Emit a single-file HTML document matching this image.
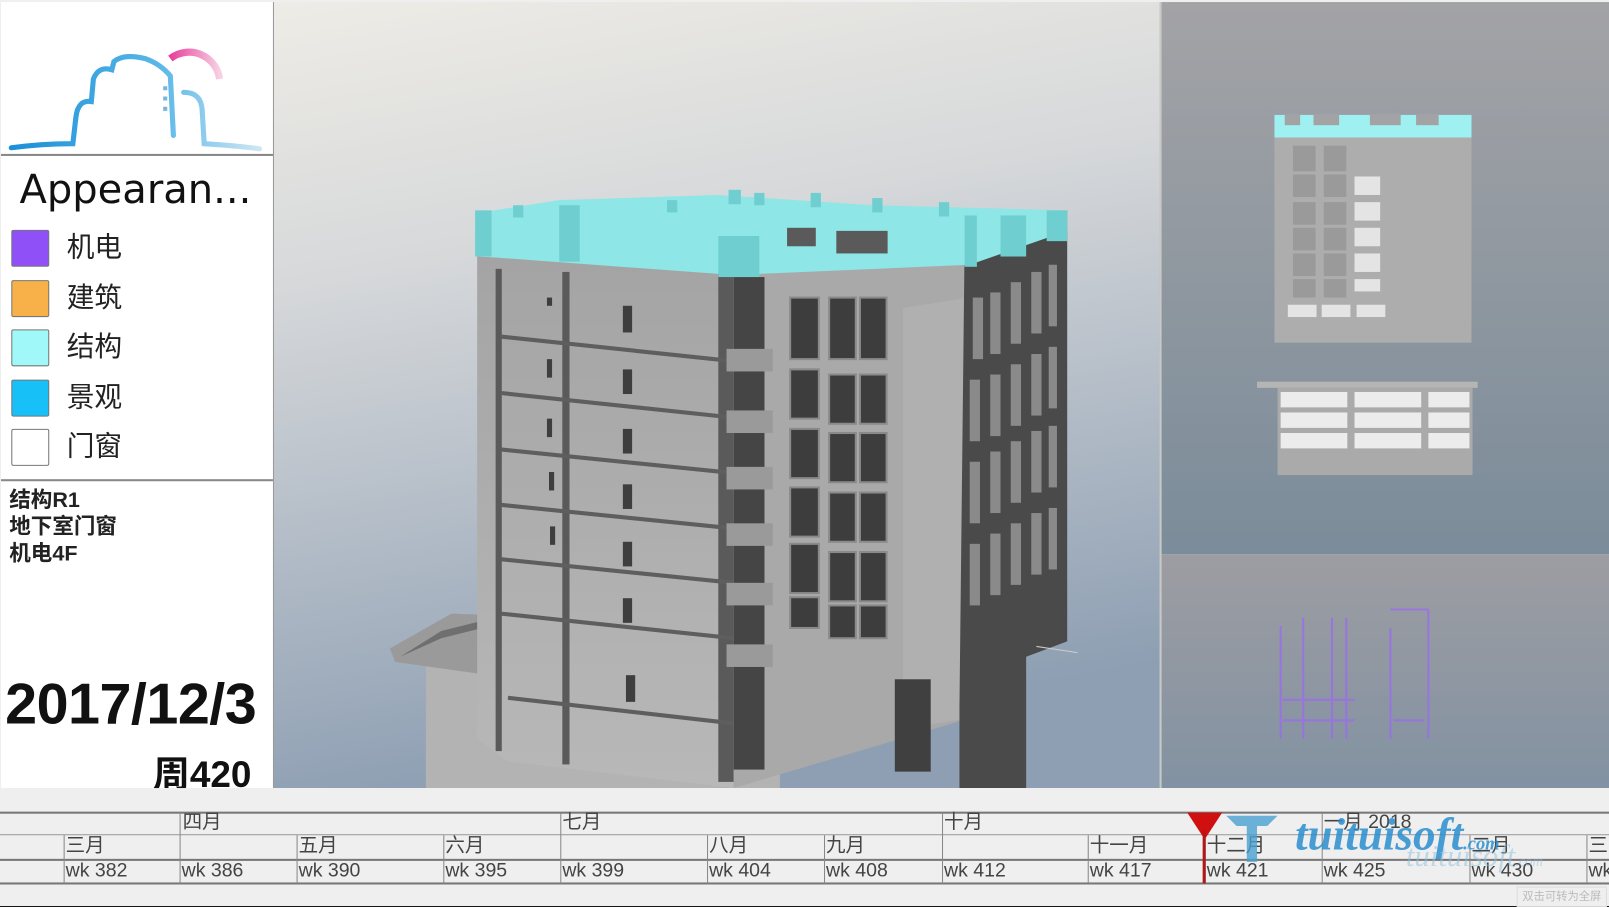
<!DOCTYPE html>
<html><head><meta charset="utf-8"><style>
html,body{margin:0;padding:0;width:1609px;height:906px;overflow:hidden;background:#000}
#w{position:absolute;left:0;top:0;width:1568px;height:883px;transform:scale(1.02615,1.0261);transform-origin:0 0;background:#000;font-family:"Liberation Sans","Noto Sans CJK SC",sans-serif}
.a{position:absolute}
#left{left:1px;top:2px;width:265px;height:766px;background:#fff}
.sw{position:absolute;left:10px;width:35px;height:34px;border:1px solid #777;border-radius:2px}
.lb{position:absolute;left:64px;font-size:27px;color:#222;line-height:34px}
.tl{position:absolute;font-size:19px;color:#444;font-family:"Liberation Sans","Noto Sans CJK SC",sans-serif;line-height:20px}
.vl{position:absolute;width:1px;background:#888}
.hl{position:absolute;left:0;width:1568px;height:2px;background:#777}
</style></head><body><div id="w">
<div class="a" style="left:0;top:0;width:1568px;height:883px;background:#efefef"></div>
<div class="a" id="left">
 <svg class="a" style="left:0;top:0" width="265" height="150">
  <defs><linearGradient id="lg" x1="0" x2="1"><stop offset="0" stop-color="#1a8fd8"/><stop offset="0.6" stop-color="#5ab8e8"/><stop offset="1" stop-color="#cfe6f3"/></linearGradient>
  <linearGradient id="pk" x1="0" x2="1"><stop offset="0" stop-color="#e8409a"/><stop offset="1" stop-color="#f8d0e4"/></linearGradient></defs>
  <path d="M165 55 A30 30 0 0 1 213 75" stroke="url(#pk)" stroke-width="7" fill="none"/>
  <path d="M10 142 Q40 138 70 138 L73 112 Q75 95 88 97 L90 75 Q95 62 108 66 L110 58 Q120 50 140 55 Q155 60 165 72 L168 130 M178 88 Q195 88 196 105 L198 138 Q230 140 252 143" stroke="url(#lg)" stroke-width="5" fill="none" stroke-linecap="round"/>
  <path d="M160 82 v4 M160 92 v4 M160 102 v4" stroke="#7bb5dd" stroke-width="4"/>
 </svg>
 <div class="a" style="left:0;top:148px;width:265px;height:2px;background:#888"></div>
 <div class="a" style="left:18px;top:161px;font-size:39px;color:#111;font-family:'DejaVu Sans',sans-serif">Appearan...</div>
 <div class="sw" style="top:222px;background:#9050f8"></div><div class="lb" style="top:222px">机电</div>
 <div class="sw" style="top:271px;background:#f8b048"></div><div class="lb" style="top:271px">建筑</div>
 <div class="sw" style="top:319px;background:#a0f8f8"></div><div class="lb" style="top:319px">结构</div>
 <div class="sw" style="top:368px;background:#18c0f8"></div><div class="lb" style="top:368px">景观</div>
 <div class="sw" style="top:416px;background:#fff"></div><div class="lb" style="top:416px">门窗</div>
 <div class="a" style="left:0;top:465px;width:265px;height:2px;background:#888"></div>
 <div class="a" style="left:8px;top:473px;font-size:21px;font-weight:bold;line-height:26px;color:#222">结构R1<br>地下室门窗<br>机电4F</div>
 <div class="a" style="left:4px;top:651px;font-size:56px;font-weight:bold;color:#111;letter-spacing:-0.5px">2017/12/3</div>
 <div class="a" style="left:148px;top:724px;font-size:36px;font-weight:bold;color:#111">周420</div>
</div>
<div class="a" style="left:266px;top:2px;width:1px;height:766px;background:#999"></div>
<svg class="a" style="left:267px;top:2px" width="863" height="766" viewBox="267 2 863 766">
 <defs>
  <linearGradient id="bg" x1="0" y1="0" x2="0.2" y2="1"><stop offset="0" stop-color="#eeece6"/><stop offset="0.35" stop-color="#d6d8da"/><stop offset="1" stop-color="#8e9fb3"/></linearGradient>
  <linearGradient id="fr" x1="0" y1="0" x2="0" y2="1"><stop offset="0" stop-color="#a4a4a4"/><stop offset="1" stop-color="#b8b8b8"/></linearGradient>
 </defs>
 <rect x="267" y="2" width="863" height="766" fill="url(#bg)"/>
 <polygon points="415,640 760,660 760,768 415,768" fill="#b3b3b3"/>
 <polygon points="380,632 440,598 492,600 492,660 420,650 385,645" fill="#9a9a9a"/>
 <polygon points="390,640 430,615 470,605 470,612 430,622" fill="#6f6f6f"/>
 <polygon points="465,250 715,262 715,768 495,742 465,720" fill="url(#fr)"/>
 <g fill="#5a5a5a">
  <rect x="483" y="262" width="6" height="470"/><rect x="548" y="265" width="7" height="480"/>
  <rect x="700" y="262" width="15" height="500"/>
 </g>
 <g stroke="#5e5e5e" stroke-width="4">
  <line x1="488" y1="328" x2="715" y2="352"/><line x1="488" y1="383" x2="715" y2="407"/>
  <line x1="488" y1="438" x2="715" y2="461"/><line x1="488" y1="492" x2="715" y2="515"/>
  <line x1="488" y1="545" x2="715" y2="568"/><line x1="488" y1="598" x2="715" y2="622"/>
  <line x1="495" y1="680" x2="715" y2="705"/>
 </g>
 <g fill="#3e3e3e">
  <rect x="607" y="298" width="9" height="26"/><rect x="607" y="360" width="9" height="24"/><rect x="607" y="418" width="9" height="24"/>
  <rect x="607" y="472" width="9" height="24"/><rect x="607" y="528" width="9" height="24"/><rect x="607" y="583" width="9" height="24"/><rect x="610" y="658" width="9" height="26"/>
  <rect x="533" y="290" width="5" height="8"/><rect x="533" y="350" width="5" height="18"/><rect x="533" y="408" width="5" height="18"/><rect x="535" y="460" width="5" height="18"/><rect x="536" y="513" width="5" height="18"/>
 </g>
 <polygon points="715,262 945,238 945,700 715,768" fill="#a9a9a9"/>
 <polygon points="880,300 945,290 945,700 880,710" fill="#b0b0b0"/>
 <g fill="#454545"><rect x="715" y="270" width="30" height="480"/></g>
 <g fill="#9a9a9a"><rect x="708" y="340" width="45" height="22"/><rect x="708" y="400" width="45" height="22"/><rect x="708" y="455" width="45" height="22"/><rect x="708" y="510" width="45" height="22"/><rect x="708" y="568" width="45" height="22"/><rect x="708" y="628" width="45" height="22"/></g>
 <g fill="#3d3d3d" stroke="#8a8a8a" stroke-width="2">
  <rect x="770" y="290" width="28" height="60"/><rect x="808" y="290" width="26" height="60"/><rect x="838" y="290" width="26" height="60"/>
  <rect x="770" y="360" width="28" height="48"/><rect x="808" y="365" width="26" height="48"/><rect x="838" y="365" width="26" height="48"/>
  <rect x="770" y="418" width="28" height="48"/><rect x="808" y="422" width="26" height="48"/><rect x="838" y="422" width="26" height="48"/>
  <rect x="770" y="475" width="28" height="48"/><rect x="808" y="480" width="26" height="48"/><rect x="838" y="480" width="26" height="48"/>
  <rect x="770" y="530" width="28" height="48"/><rect x="808" y="538" width="26" height="48"/><rect x="838" y="538" width="26" height="48"/>
  <rect x="770" y="582" width="28" height="30"/><rect x="808" y="590" width="26" height="32"/><rect x="838" y="590" width="26" height="32"/>
 </g>
 <g fill="#404040"><rect x="872" y="662" width="35" height="90"/></g>
 <polygon points="940,240 1040,205 1040,625 1000,640 1000,768 935,768 935,690" fill="#4a4a4a"/>
 <g fill="#8a8a8a">
  <rect x="948" y="290" width="10" height="60"/><rect x="965" y="285" width="10" height="60"/><rect x="985" y="275" width="10" height="60"/><rect x="1005" y="265" width="10" height="60"/><rect x="1022" y="258" width="8" height="60"/>
  <rect x="945" y="370" width="10" height="60"/><rect x="965" y="365" width="10" height="60"/><rect x="985" y="355" width="10" height="60"/><rect x="1005" y="345" width="10" height="60"/><rect x="1022" y="338" width="8" height="60"/>
  <rect x="945" y="450" width="10" height="60"/><rect x="965" y="440" width="10" height="60"/><rect x="985" y="430" width="10" height="60"/><rect x="1005" y="420" width="10" height="60"/><rect x="1022" y="415" width="8" height="60"/>
  <rect x="945" y="530" width="10" height="60"/><rect x="965" y="520" width="10" height="60"/><rect x="985" y="510" width="10" height="60"/><rect x="1005" y="500" width="10" height="60"/><rect x="1022" y="495" width="8" height="60"/>
 </g>
 <g fill="#8fe6e6"><polygon points="463,208 545,195 700,190 850,200 1040,205 1040,225 945,258 715,268 470,250"/></g>
 <g fill="#6fcfd0">
  <rect x="463" y="205" width="16" height="45"/><rect x="545" y="200" width="20" height="55"/><rect x="700" y="230" width="40" height="40"/><rect x="940" y="210" width="12" height="50"/><rect x="975" y="210" width="25" height="40"/><rect x="1020" y="205" width="20" height="30"/>
  <rect x="500" y="200" width="10" height="12"/><rect x="650" y="195" width="10" height="12"/><rect x="710" y="185" width="12" height="14"/><rect x="735" y="188" width="10" height="12"/><rect x="790" y="188" width="10" height="14"/><rect x="850" y="193" width="10" height="14"/><rect x="915" y="197" width="10" height="14"/>
 </g>
 <g fill="#5a5a5a"><rect x="767" y="222" width="28" height="18"/><rect x="815" y="225" width="50" height="22"/></g>
 <line x1="1010" y1="630" x2="1050" y2="636" stroke="#ccc" stroke-width="1"/>
</svg>
<svg class="a" style="left:1130px;top:2px" width="440" height="766">
 <defs>
  <linearGradient id="rt" x1="0" y1="0" x2="0" y2="1"><stop offset="0" stop-color="#a3a3a6"/><stop offset="1" stop-color="#7b8c9a"/></linearGradient>
  <linearGradient id="rb" x1="0" y1="0" x2="0" y2="1"><stop offset="0" stop-color="#9d9da2"/><stop offset="1" stop-color="#8292a2"/></linearGradient>
 </defs>
 <rect x="0" y="0" width="440" height="538" fill="url(#rt)"/>
 <rect x="0" y="538" width="440" height="228" fill="url(#rb)"/>
 <rect x="0" y="0" width="2" height="766" fill="#c8c8c6"/>
 <rect x="112" y="110" width="192" height="22" fill="#9ff0f0"/>
 <g fill="#a3a3a6"><rect x="122" y="110" width="15" height="10"/><rect x="150" y="110" width="25" height="10"/><rect x="205" y="110" width="30" height="10"/><rect x="250" y="110" width="22" height="10"/></g>
 <rect x="112" y="132" width="192" height="200" fill="#adadad"/>
 <g fill="#9a9a9a"><rect x="130" y="140" width="22" height="25"/><rect x="160" y="140" width="22" height="25"/><rect x="130" y="168" width="22" height="22"/><rect x="160" y="168" width="22" height="22"/><rect x="130" y="195" width="22" height="22"/><rect x="160" y="195" width="22" height="22"/><rect x="130" y="220" width="22" height="22"/><rect x="160" y="220" width="22" height="22"/><rect x="130" y="245" width="22" height="22"/><rect x="160" y="245" width="22" height="22"/><rect x="130" y="270" width="22" height="18"/><rect x="160" y="270" width="22" height="18"/></g>
 <g fill="#e4e4e4"><rect x="190" y="170" width="25" height="18"/><rect x="190" y="195" width="25" height="18"/><rect x="190" y="220" width="25" height="18"/><rect x="190" y="245" width="25" height="18"/><rect x="190" y="270" width="25" height="12"/>
 <rect x="125" y="295" width="28" height="12"/><rect x="158" y="295" width="28" height="12"/><rect x="192" y="295" width="28" height="12"/></g>
 <rect x="95" y="370" width="215" height="6" fill="#b5b5b5"/>
 <rect x="115" y="376" width="190" height="85" fill="#aaa"/>
 <g fill="#ececec"><rect x="118" y="380" width="65" height="15"/><rect x="118" y="400" width="65" height="15"/><rect x="118" y="420" width="65" height="15"/><rect x="190" y="380" width="65" height="15"/><rect x="190" y="400" width="65" height="15"/><rect x="190" y="420" width="65" height="15"/><rect x="262" y="380" width="40" height="15"/><rect x="262" y="400" width="40" height="15"/><rect x="262" y="420" width="40" height="15"/></g>
 <g stroke="#9a6cf0" stroke-width="2" fill="none" opacity="0.8">
  <path d="M118 608 V718 M140 600 V718 M168 600 V718 M182 600 V718 M120 680 H190 M120 700 H190 M225 592 H262 M262 592 V718 M225 610 V718 M228 700 H258"/>
 </g>
</svg>
<div class="a" style="left:0;top:768px;width:1568px;height:115px;background:#efefef"></div>
<div class="hl" style="top:791px"></div>
<div class="hl" style="top:813px;height:1px;background:#999"></div>
<div class="hl" style="top:837px"></div>
<div class="hl" style="top:860px"></div>
<div class="vl" style="left:175px;top:792px;height:69px"></div><div class="vl" style="left:546px;top:792px;height:69px"></div><div class="vl" style="left:918px;top:792px;height:69px"></div><div class="vl" style="left:1288px;top:792px;height:69px"></div>
<div class="vl" style="left:62px;top:814px;height:47px"></div><div class="vl" style="left:289px;top:814px;height:47px"></div><div class="vl" style="left:432px;top:814px;height:47px"></div><div class="vl" style="left:689px;top:814px;height:47px"></div><div class="vl" style="left:803px;top:814px;height:47px"></div><div class="vl" style="left:1060px;top:814px;height:47px"></div><div class="vl" style="left:1174px;top:814px;height:47px"></div><div class="vl" style="left:1432px;top:814px;height:47px"></div><div class="vl" style="left:1546px;top:814px;height:47px"></div>
<div class="tl" style="left:178px;top:792px">四月</div><div class="tl" style="left:548px;top:792px">七月</div><div class="tl" style="left:920px;top:792px">十月</div><div class="tl" style="left:1290px;top:792px">一月 2018</div>
<div class="tl" style="left:64px;top:815px">三月</div><div class="tl" style="left:291px;top:815px">五月</div><div class="tl" style="left:434px;top:815px">六月</div><div class="tl" style="left:691px;top:815px">八月</div><div class="tl" style="left:805px;top:815px">九月</div><div class="tl" style="left:1062px;top:815px">十一月</div><div class="tl" style="left:1176px;top:815px">十二月</div><div class="tl" style="left:1434px;top:815px">二月</div><div class="tl" style="left:1548px;top:815px">三</div>
<div class="tl" style="left:64px;top:839px">wk 382</div><div class="tl" style="left:177px;top:839px">wk 386</div><div class="tl" style="left:291px;top:839px">wk 390</div><div class="tl" style="left:434px;top:839px">wk 395</div><div class="tl" style="left:548px;top:839px">wk 399</div><div class="tl" style="left:691px;top:839px">wk 404</div><div class="tl" style="left:805px;top:839px">wk 408</div><div class="tl" style="left:920px;top:839px">wk 412</div><div class="tl" style="left:1062px;top:839px">wk 417</div><div class="tl" style="left:1176px;top:839px">wk 421</div><div class="tl" style="left:1290px;top:839px">wk 425</div><div class="tl" style="left:1434px;top:839px">wk 430</div><div class="tl" style="left:1548px;top:839px">wk</div>
<svg class="a" style="left:1155px;top:790px" width="40" height="72"><polygon points="2,2 36,2 19,28" fill="#d01010"/><rect x="17" y="20" width="3" height="51" fill="#b01818"/></svg>
<svg class="a" style="left:1190px;top:790px" width="70" height="55"><path d="M5 5 H55 L45 15 H35 V50 H25 V15 H15 Z" fill="#4aa0d0" opacity="0.8"/></svg>
<div class="a" style="left:1262px;top:788px;font-family:'Liberation Serif',serif;font-style:italic;font-weight:bold;font-size:44px;color:#2a8fcf;opacity:0.85">tuituisoft<span style="font-size:18px">.com</span></div>
<div class="a" style="left:1370px;top:818px;font-family:'Liberation Serif',serif;font-style:italic;font-size:30px;color:#8cc0e0;opacity:0.5">tuituisoft<span style="font-size:14px">.com</span></div>
<div class="a" style="left:1478px;top:864px;width:86px;height:18px;border:1px solid #ddd;font-size:11px;color:#bbb;line-height:18px;text-align:center">双击可转为全屏</div>
</div></body></html>
